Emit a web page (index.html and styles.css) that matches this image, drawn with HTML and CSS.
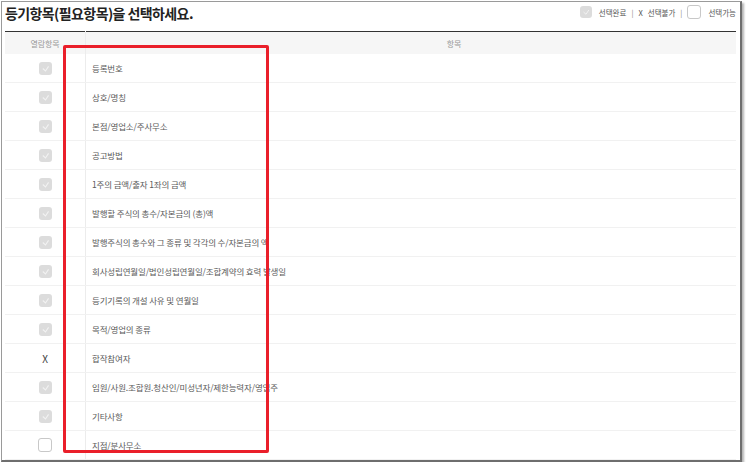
FILE: index.html
```html
<!DOCTYPE html>
<html>
<head>
    <link rel="stylesheet" href="styles.css">
</head>
<body>
    <div class="frame">
        <div class="top">
            <h1>등기항목(필요항목)을 선택하세요.</h1>
            <div class="legend">
                <span class="chk done"><svg viewBox="0 0 12 12"><path d="M3.5 6 L6 8.3 L8.8 4"/></svg></span>
                <span>선택완료</span>
                <span class="sep">|</span>
                <span>X</span>
                <span>선택불가</span>
                <span class="sep">|</span>
                <span class="chk empty"></span>
                <span>선택가능</span>
            </div>
        </div>

        <table class="items">
            <thead>
                <tr>
                    <th class="col-check">열람항목</th>
                    <th class="col-name">항목</th>
                </tr>
            </thead>
            <tbody id="rows"></tbody>
        </table>
    </div>

    <div class="highlight"></div>

    <script>
        const items = [
            ['done', '등록번호'],
            ['done', '상호/명칭'],
            ['done', '본점/영업소/주사무소'],
            ['done', '공고방법'],
            ['done', '1주의 금액/출자 1좌의 금액'],
            ['done', '발행할 주식의 총수/자본금의 (총)액'],
            ['done', '발행주식의 총수와 그 종류 및 각각의 수/자본금의 액'],
            ['done', '회사성립연월일/법인성립연월일/조합계약의 효력 발생일'],
            ['done', '등기기록의 개설 사유 및 연월일'],
            ['done', '목적/영업의 종류'],
            ['no', '합작참여자'],
            ['done', '임원/사원.조합원.청산인/미성년자/제한능력자/영업주'],
            ['done', '기타사항'],
            ['empty', '지점/분사무소']
        ];

        const check = '<svg viewBox="0 0 12 12"><path d="M3.5 6 L6 8.3 L8.8 4"/></svg>';

        document.getElementById('rows').innerHTML = items.map(([state, name]) => {
            let mark = '<span class="x">X</span>';
            if (state === 'done') mark = `<span class="chk done">${check}</span>`;
            if (state === 'empty') mark = '<span class="chk empty"></span>';
            return `<tr><td class="col-check">${mark}</td><td class="col-name">${name}</td></tr>`;
        }).join('');
    </script>
</body>
</html>
```

FILE: styles.css
```css
body {
    margin: 0;
    background: #fff;
    font-family: 'Noto Sans CJK KR', 'Noto Sans', sans-serif;
    color: #555;
}

.frame {
    margin: 1px 0 0 1px;
    width: 741px;
    height: 461px;
    border-left: 1px solid #9a9a9a;
    border-top: 1px solid #9a9a9a;
    border-right: 2px solid #6e6e6e;
    border-bottom: 2px solid #6e6e6e;
    box-shadow: 2px 2px 2px rgba(0, 0, 0, 0.3);
    padding: 0 4px 0 3px;
    box-sizing: border-box;
    overflow: hidden;
}

.top {
    height: 29px;
    display: flex;
    justify-content: space-between;
    align-items: flex-start;
}

h1 {
    margin: 0;
    padding-top: 1px;
    font-size: 14px;
    font-weight: bold;
    color: #222;
    line-height: 20px;
    letter-spacing: -0.6px;
}

.legend {
    display: flex;
    align-items: center;
    gap: 5px;
    font-size: 7.5px;
    color: #555;
    padding-top: 3px;
}

.legend .chk {
    width: 12px;
    height: 12px;
    margin-right: 2px;
}

.legend .sep {
    color: #888;
}

.chk {
    display: inline-block;
    width: 13px;
    height: 13px;
    border-radius: 3px;
    box-sizing: border-box;
    vertical-align: middle;
}

.chk.done {
    background: #dcdcdc;
}

.chk.done svg {
    display: block;
    width: 100%;
    height: 100%;
}

.chk.done path {
    fill: none;
    stroke: #f2f2f2;
    stroke-width: 1;
}

.chk.empty {
    background: #fff;
    border: 1px solid #c8c8c8;
    width: 14px;
    height: 14px;
}

.items {
    width: 731px;
    border-collapse: collapse;
    border-top: 1px solid #333;
    font-size: 8.5px;
    letter-spacing: -0.15px;
}

.items th {
    height: 22px;
    padding: 0;
    background: #f6f6f6;
    font-weight: normal;
    font-size: 8px;
    color: #999;
}

.items th.col-name {
    padding-left: 86px;
}

.items td {
    height: 28px;
    padding: 0;
    border-bottom: 1px solid #f1f1f1;
}

.col-check {
    width: 80px;
    text-align: center;
    border-right: 1px solid #ececec;
}

.items td.col-name {
    padding-left: 6px;
    color: #5a5a5a;
}

.x {
    font-size: 10px;
    color: #444;
}

.highlight {
    position: absolute;
    left: 63px;
    top: 45px;
    width: 206px;
    height: 408px;
    border: 3.5px solid #ea1f2a;
    border-radius: 2px;
    box-sizing: border-box;
}
```
